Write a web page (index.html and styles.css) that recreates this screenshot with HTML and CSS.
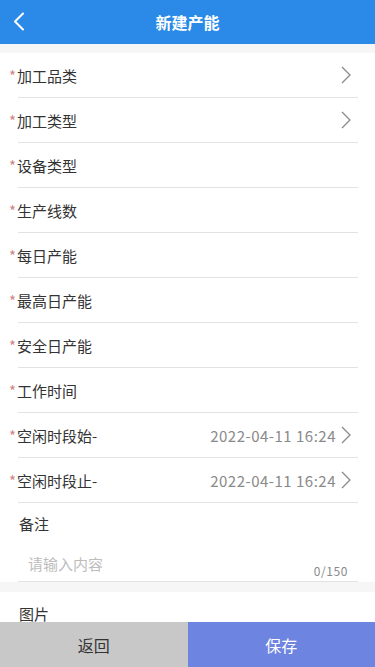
FILE: index.html
```html
<!DOCTYPE html>
<html lang="zh">
<head>
<meta charset="utf-8">
<meta name="viewport" content="width=device-width, initial-scale=1">
<title>新建产能</title>
<link rel="stylesheet" href="styles.css">
</head>
<body>
<div class="page">
  <header class="topbar">
    <span class="back">
      <svg width="12" height="19" viewBox="0 0 12 19"><path d="M10 1.5 L2 9.5 L10 17.5" fill="none" stroke="#fff" stroke-width="2" stroke-linecap="round" stroke-linejoin="round"/></svg>
    </span>
    <h1 class="title">新建产能</h1>
  </header>

  <div class="gap"></div>

  <section class="form">
    <div class="row"><span class="label"><i class="star">*</i>加工品类</span><span class="arrow"><svg width="10" height="18" viewBox="0 0 10 18"><path d="M1 1 L9 9 L1 17" fill="none" stroke="#8a8a8a" stroke-width="1.3"/></svg></span></div>
    <div class="row"><span class="label"><i class="star">*</i>加工类型</span><span class="arrow"><svg width="10" height="18" viewBox="0 0 10 18"><path d="M1 1 L9 9 L1 17" fill="none" stroke="#8a8a8a" stroke-width="1.3"/></svg></span></div>
    <div class="row"><span class="label"><i class="star">*</i>设备类型</span></div>
    <div class="row"><span class="label"><i class="star">*</i>生产线数</span></div>
    <div class="row"><span class="label"><i class="star">*</i>每日产能</span></div>
    <div class="row"><span class="label"><i class="star">*</i>最高日产能</span></div>
    <div class="row"><span class="label"><i class="star">*</i>安全日产能</span></div>
    <div class="row"><span class="label"><i class="star">*</i>工作时间</span></div>
    <div class="row"><span class="label"><i class="star">*</i>空闲时段始-</span><span class="value">2022-04-11 16:24</span><span class="arrow"><svg width="10" height="18" viewBox="0 0 10 18"><path d="M1 1 L9 9 L1 17" fill="none" stroke="#8a8a8a" stroke-width="1.3"/></svg></span></div>
    <div class="row"><span class="label"><i class="star">*</i>空闲时段止-</span><span class="value">2022-04-11 16:24</span><span class="arrow"><svg width="10" height="18" viewBox="0 0 10 18"><path d="M1 1 L9 9 L1 17" fill="none" stroke="#8a8a8a" stroke-width="1.3"/></svg></span></div>

    <div class="remark">
      <div class="remark-label">备注</div>
      <div class="remark-box">
        <span class="placeholder">请输入内容</span>
        <span class="count">0/150</span>
      </div>
    </div>
  </section>

  <div class="gap gap-small"></div>

  <section class="pics">
    <div class="pics-label">图片</div>
  </section>

  <footer class="actions">
    <button class="btn btn-back">返回</button>
    <button class="btn btn-save">保存</button>
  </footer>
</div>
</body>
</html>
```

FILE: styles.css
```css
* { box-sizing: border-box; }
html, body {
  margin: 0;
  padding: 0;
  background: #fff;
  font-family: "Noto Sans CJK SC", "Noto Sans", "Liberation Sans", sans-serif;
  color: #333;
}
.page {
  width: 375px;
  height: 667px;
  overflow: hidden;
  display: flex;
  flex-direction: column;
  position: relative;
}
.topbar {
  height: 44px;
  background: #2b8ae7;
  display: flex;
  align-items: center;
  justify-content: center;
  position: relative;
  flex-shrink: 0;
}
.back {
  position: absolute;
  left: 13px;
  top: 12px;
  display: flex;
}
.title {
  margin: 0;
  font-size: 16px;
  font-weight: 700;
  color: #fff;
}
.gap {
  height: 9px;
  background: #f6f6f6;
  flex-shrink: 0;
}
.gap-small {
  height: 10px;
}
.form {
  display: flex;
  flex-direction: column;
}
.row {
  height: 45px;
  margin: 0 17px 0 18px;
  border-bottom: 1px solid #e2e2e2;
  display: flex;
  align-items: center;
}
.label {
  margin-left: -9px;
  font-size: 15px;
  color: #333;
  flex: 1;
}
.star {
  font-style: normal;
  color: #cf8585;
  margin-right: 1px;
}
.value {
  font-size: 15px;
  letter-spacing: 0.5px;
  color: #8a8a8a;
  margin-right: 5px;
}
.arrow {
  display: flex;
  margin-right: 7px;
}
.remark {
  padding: 0 17px 0 18px;
}
.remark-label {
  height: 41px;
  display: flex;
  align-items: center;
  font-size: 15px;
  padding-left: 1px;
}
.remark-box {
  height: 38px;
  border-bottom: 1px solid #e2e2e2;
  display: flex;
  justify-content: space-between;
}
.placeholder {
  margin-left: 10px;
  margin-top: 9px;
  font-size: 15px;
  color: #bdbdbd;
}
.count {
  align-self: flex-end;
  margin-bottom: 2px;
  margin-right: 10px;
  font-size: 12px;
  letter-spacing: 0.6px;
  color: #8a8a8a;
}
.pics {
  padding: 0 18px;
}
.pics-label {
  height: 42px;
  display: flex;
  align-items: center;
  font-size: 15px;
  padding-left: 1px;
}
.actions {
  position: absolute;
  left: 0;
  right: 0;
  bottom: 0;
  height: 45px;
  display: flex;
}
.btn {
  flex: 1;
  border: none;
  margin: 0;
  font-family: inherit;
  font-size: 16px;
}
.btn-back {
  background: #c8c8c8;
  color: #333;
}
.btn-save {
  background: #6d84e0;
  color: #fff;
}
```
